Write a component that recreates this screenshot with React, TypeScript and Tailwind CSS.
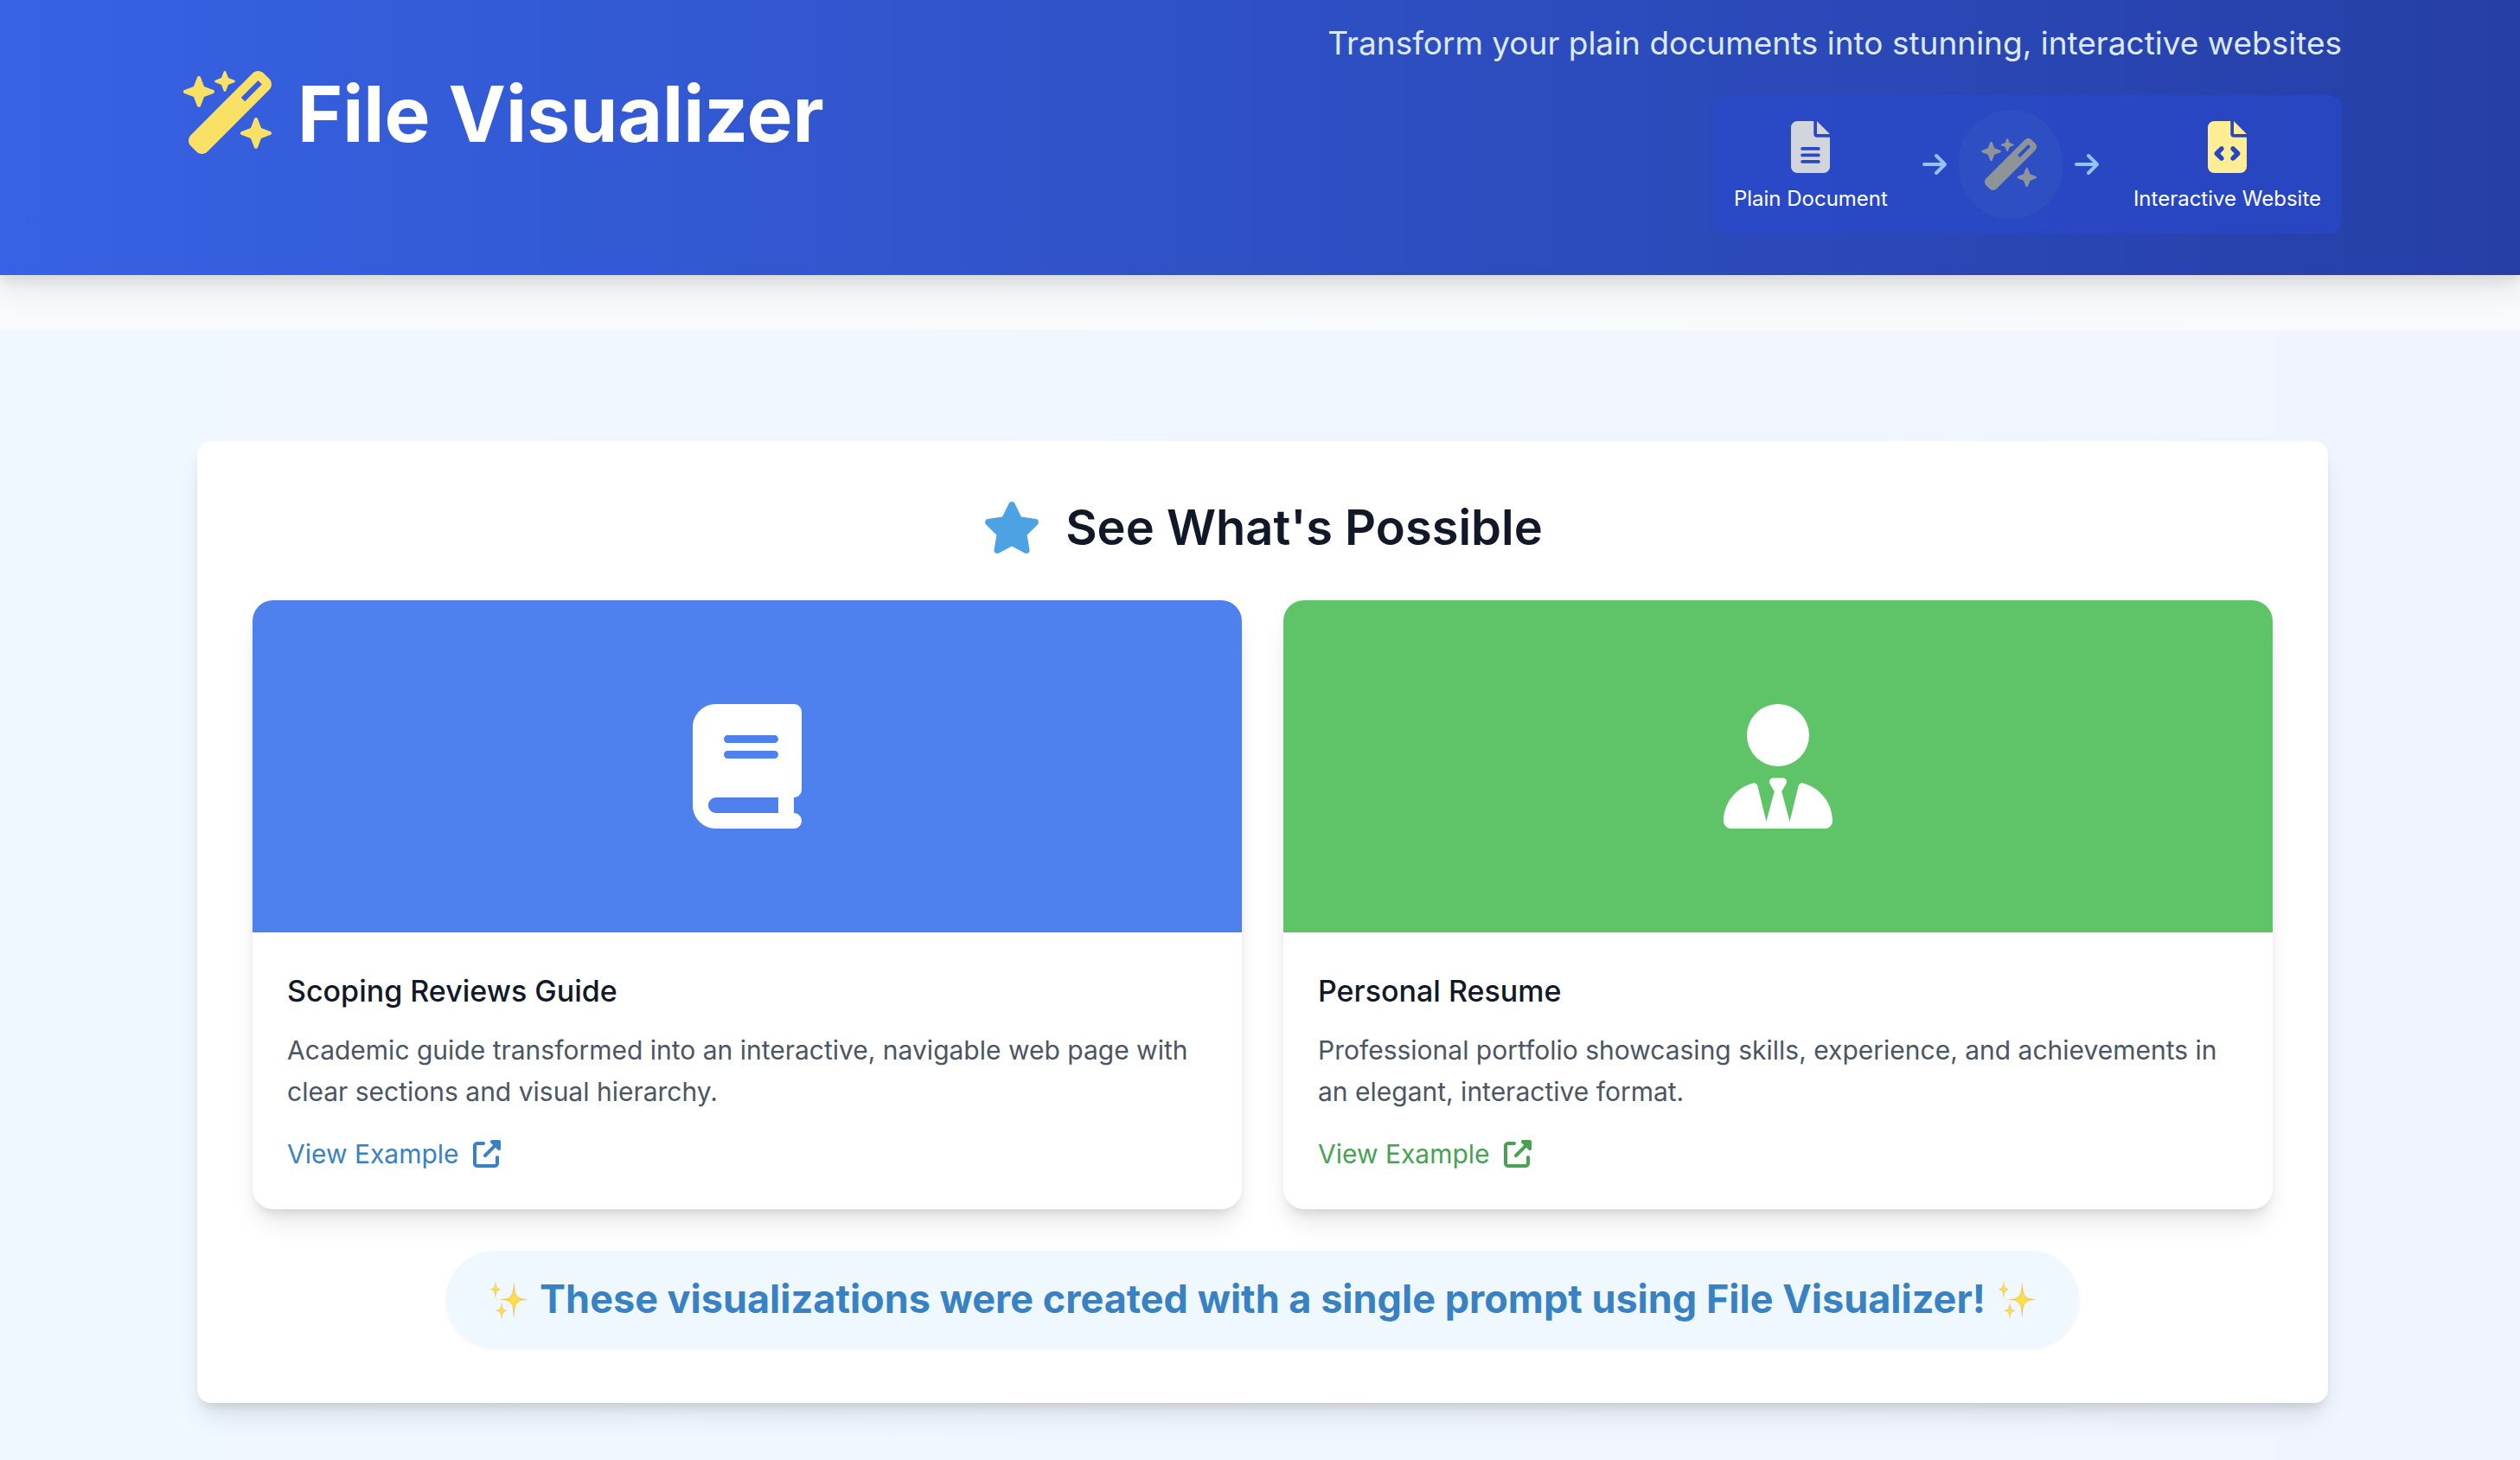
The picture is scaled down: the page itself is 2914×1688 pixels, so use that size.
import React from 'react';
import {
  FaArrowRight,
  FaBook,
  FaFileCode,
  FaFileLines,
  FaStar,
  FaUpRightFromSquare,
  FaUserTie,
  FaWandMagicSparkles,
} from 'react-icons/fa6';

interface ExampleCardProps {
  title: string;
  description: string;
  icon: React.ReactNode;
  bannerClass: string;
  linkClass: string;
}

const Sparkles: React.FC = () => (
  <svg viewBox="-3 -3 48 48" className="size-12 shrink-0" aria-hidden="true">
    <defs>
      <radialGradient id="sparkle">
        <stop offset="0%" stopColor="#fbe34e" />
        <stop offset="40%" stopColor="#f8d558" />
        <stop offset="100%" stopColor="#e9a56c" />
      </radialGradient>
    </defs>
    <g fill="url(#sparkle)">
      <path d="M27.300 0.500 C28.300 11 29 15 32 18 C35 20.500 38 21 44 21.500 C38 22 35 22.500 32 25 C29 28 28.300 32 27.300 43 C26.300 32 25.600 28 22.600 25 C19.600 22.500 16.600 22 10.600 21.500 C16.600 21 19.600 20.500 22.600 18 C25.600 15 26.300 11 27.300 0.500Z" />
      <path d="M6 -0.500 C6.600 6 7.500 9 12.500 9.800 C7.500 10.600 6.600 14 6 20.500 C5.400 14 4.500 10.600 -0.500 9.800 C4.500 9 5.400 6 6 -0.500Z" />
      <path d="M13 24 C13.600 30 14.500 33.500 19.800 34.300 C14.500 35.100 13.600 38.500 13 45 C12.400 38.500 11.500 35.100 6.200 34.300 C11.500 33.500 12.400 30 13 24Z" />
    </g>
  </svg>
);

const ExampleCard: React.FC<ExampleCardProps> = ({ title, description, icon, bannerClass, linkClass }) => {
  return (
    <article className="overflow-hidden rounded-3xl bg-white shadow-[0_20px_30px_-6px_rgba(0,0,0,0.1),0_8px_12px_-4px_rgba(0,0,0,0.1)]">
      <div className={`flex h-96 items-center justify-center text-white ${bannerClass}`}>{icon}</div>
      <div className="p-10">
        <h3 className="mb-4 text-[34px] leading-[56px] font-medium text-[#111827]">{title}</h3>
        <p className="mb-6 text-[30px] leading-[48px] text-[#4b5563]">{description}</p>
        <a href="#" className={`inline-flex items-center gap-4 text-[30px] leading-[48px] ${linkClass}`}>
          View Example
          <FaUpRightFromSquare className="size-8" />
        </a>
      </div>
    </article>
  );
};

const Header: React.FC = () => {
  return (
    <header className="relative bg-linear-to-r from-[#3762e3] to-[#263fa7] pt-[22px] pb-12 pl-1.5 shadow-[0_20px_30px_0_rgba(0,0,0,0.07),0_8px_12px_0_rgba(0,0,0,0.07)]">
      <div className="mx-auto flex max-w-[2560px] items-center justify-between px-8">
        <div className="flex items-center gap-6 pb-8">
          <FaWandMagicSparkles className="h-24 w-[108px] text-[#fae064]" />
          <h1 className="pt-1 text-[89px] leading-[96px] font-bold text-white">File Visualizer</h1>
        </div>
        <div className="flex flex-col items-end">
          <p className="mb-8 text-[37px] leading-[56px] text-[#dde9fc]">
            Transform your plain documents into stunning, interactive websites
          </p>
          <div className="flex items-center rounded-2xl bg-[#2949cf]/60 p-6">
            <div className="flex flex-col items-center gap-3.5 pt-1.5 text-white">
              <FaFileLines className="h-[60px] w-[45px] text-[#d2d5db]" />
              <span className="text-[24px] leading-8">Plain Document</span>
            </div>
            <FaArrowRight className="mr-3.5 ml-10 h-8 w-7 text-[#93c3fb]" />
            <div className="-my-2 flex h-[126px] w-[120px] items-center justify-center rounded-full bg-[#2e4fc4]">
              <FaWandMagicSparkles className="h-[60px] w-[68px] text-[#8e9598]" />
            </div>
            <FaArrowRight className="mr-10 ml-3.5 h-8 w-7 text-[#93c3fb]" />
            <div className="flex flex-col items-center gap-3.5 pt-1.5 text-white">
              <FaFileCode className="h-[60px] w-[45px] text-[#fdee95]" />
              <span className="text-[24px] leading-8">Interactive Website</span>
            </div>
          </div>
        </div>
      </div>
    </header>
  );
};

const App: React.FC = () => {
  return (
    <div className="flex min-h-screen flex-col bg-[#f9fafb] font-[Inter,sans-serif]">
      <Header />
      <main className="mt-16 flex-1 bg-linear-to-r from-[#f0f8ff] to-[#f0f4fe] pt-32 pb-16 pl-1.5">
        <section className="mx-auto max-w-[2464px] rounded-2xl bg-white p-16 shadow-[0_20px_30px_-6px_rgba(0,0,0,0.1),0_8px_12px_-4px_rgba(0,0,0,0.1)]">
          <h2 className="mb-12 flex items-center justify-center gap-7 text-[56px] leading-[72px] font-semibold text-[#111827]">
            <FaStar className="h-[60px] w-[68px] text-[#4ca2e3]" />
            See What's Possible
          </h2>

          <div className="grid grid-cols-2 gap-12">
            <ExampleCard
              title="Scoping Reviews Guide"
              description="Academic guide transformed into an interactive, navigable web page with clear sections and visual hierarchy."
              icon={<FaBook className="h-36 w-[126px]" />}
              bannerClass="bg-[#4e81ee]"
              linkClass="text-[#3882c4]"
            />
            <ExampleCard
              title="Personal Resume"
              description="Professional portfolio showcasing skills, experience, and achievements in an elegant, interactive format."
              icon={<FaUserTie className="h-36 w-[126px]" />}
              bannerClass="bg-[#5fc468]"
              linkClass="text-[#49a152]"
            />
          </div>

          <div className="mt-12 flex justify-center">
            <p className="flex items-center gap-3 rounded-full bg-[#f0f8ff] px-12 py-5 text-[45px] leading-[72px] font-bold text-[#3882c4] shadow-[0_2px_4px_rgba(0,0,0,0.05)]">
              <Sparkles />
              These visualizations were created with a single prompt using File Visualizer!
              <Sparkles />
            </p>
          </div>
        </section>
      </main>
    </div>
  );
};

export default App;
